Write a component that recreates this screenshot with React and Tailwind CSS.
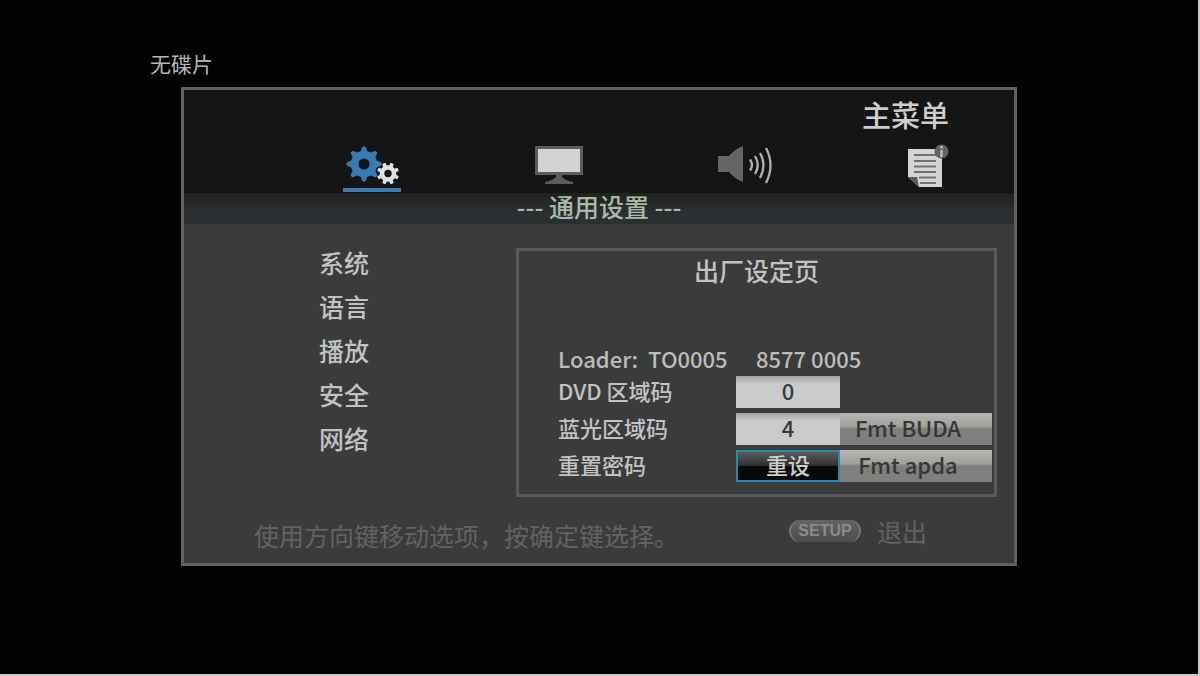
import React from 'react';

const menuItems = ['系统', '语言', '播放', '安全', '网络'];
const teeth = [0, 45, 90, 135, 180, 225, 270, 315];

function GeneralIcon() {
    return (
        <svg width="58" height="42" viewBox="0 0 58 42" aria-hidden="true">
            <g transform="translate(21 18)">
                <circle r="9.4" fill="none" stroke="#367db4" strokeWidth="7.6" />
                {teeth.map((angle) => (
                    <path
                        key={angle}
                        d="M-3.4 -12 L-2 -16.5 Q0 -19 2 -16.5 L3.4 -12 Z"
                        fill="#367db4"
                        transform={`rotate(${angle})`}
                    />
                ))}
            </g>
            <g transform="translate(45 27.5)">
                <circle r="6" fill="none" stroke="#e2e2e2" strokeWidth="4.6" />
                {teeth.map((angle) => (
                    <path
                        key={angle}
                        d="M-2 -7.5 L-1.6 -11 H1.6 L2 -7.5 Z"
                        fill="#e2e2e2"
                        transform={`rotate(${angle + 22.5})`}
                    />
                ))}
            </g>
        </svg>
    );
}

function DisplayIcon() {
    return (
        <svg width="48" height="42" viewBox="0 0 48 42" aria-hidden="true">
            <rect x="1.5" y="1.5" width="45" height="26" fill="#d2d2d2" stroke="#5c5c5c" strokeWidth="3" />
            <path d="M21 29 H27 V31 Q31 35 38 36 V38 H10 V36 Q17 35 21 31 Z" fill="#5c5c5c" />
        </svg>
    );
}

function AudioIcon() {
    return (
        <svg width="56" height="42" viewBox="0 0 56 42" aria-hidden="true">
            <path d="M0 10 H11 Q17 3 25 0 V36 Q17 33 11 26 H0 Z" fill="#656565" />
            <g fill="none" stroke="#b0b0b0" strokeWidth="2.3">
                <path d="M32 13.5 Q36 19 32 24.5" />
                <path d="M37 10 Q42.5 19 37 28" />
                <path d="M42 7 Q49 19 42 32" />
                <path d="M48 2 Q57 19 48 37" />
            </g>
        </svg>
    );
}

function InfoIcon() {
    return (
        <svg width="41" height="42" viewBox="0 0 41 42" className="overflow-visible" aria-hidden="true">
            <path d="M0 3 H34 V41 H11 L0 31 Z" fill="#d4d4d4" />
            <path d="M0 31 H9 L11 41 Z" fill="#5a5a5a" />
            <path d="M6 9 H28 M6 15 H28 M6 20.5 H28 M6 26 H28 M11 31.5 H28 M12 37 H28" stroke="#707070" strokeWidth="1.8" />
            <circle cx="33.5" cy="5.5" r="7" fill="#636363" />
            <path d="M33.5 0 V2.5 M33.5 4 V11" stroke="#bdbdbd" strokeWidth="2.4" />
        </svg>
    );
}

const tabs = [
    { name: '通用设置', Icon: GeneralIcon, active: true },
    { name: '显示设置', Icon: DisplayIcon },
    { name: '音频设置', Icon: AudioIcon },
    { name: '系统信息', Icon: InfoIcon },
];

const fieldClass =
    'h-8 w-full bg-linear-to-b from-[#a4a4a4] to-[#cbcbcb] to-25% pb-1 text-center text-[22px] font-medium text-[#383838]';
const formatClass =
    'h-8 w-full bg-linear-to-b from-[#b5b5b2] via-[#a0a09d] via-42% to-[#7f7f7d] to-50% pr-4 pb-1 text-center text-[22px] leading-7 font-medium text-[#363636]';

export default function App() {
    return (
        <div className="min-h-screen border-r-2 border-b-2 border-[#c8c8c8] bg-black pt-[47px] font-['Noto_Sans_CJK_SC','Noto_Sans',sans-serif] text-[#cdcdcd]">
            <div className="mx-auto max-w-[898px]">
                <p className="mb-2 text-[21px] leading-8 text-[#b5b5b5]">无碟片</p>

                <main className="mx-[31px] border-3 border-[#606060] bg-[#3b3b3b]">
                    {/* Title and tab icons */}
                    <header className="bg-[#141414] pt-2 pr-[65px] pl-[159px]">
                        <h1 className="text-right text-[29px] leading-8 font-medium">主菜单</h1>
                        <nav className="mt-4 flex items-start justify-between pb-px">
                            {tabs.map(({ name, Icon, active }) => (
                                <button
                                    key={name}
                                    type="button"
                                    aria-label={name}
                                    className={active ? 'border-b-4 border-[#367db4]' : 'border-b-4 border-transparent'}
                                >
                                    <Icon />
                                </button>
                            ))}
                        </nav>
                    </header>

                    <h2 className="bg-linear-to-b from-[#202020] to-[#2b2f32] to-60% pb-1 text-center text-[25px] leading-[27px] font-medium text-[#a9bba8]">
                        --- 通用设置 ---
                    </h2>

                    <div className="flex items-start justify-between pt-6 pr-[17px] pl-[135px]">
                        <ul className="-mt-2">
                            {menuItems.map((item) => (
                                <li key={item}>
                                    <button type="button" className="block text-[25px] leading-[44px] font-medium text-[#c2c2c2]">
                                        {item}
                                    </button>
                                </li>
                            ))}
                        </ul>

                        {/* Factory settings */}
                        <section className="w-[481px] border-3 border-[#595961] pt-[3px] pr-0.5 pb-3 pl-[39px]">
                            <h3 className="pr-[37px] text-center text-[25px] leading-8 font-medium text-[#c2c2c2]">出厂设定页</h3>
                            <p className="mt-[58px] flex text-[22px] leading-7 font-medium text-[#bcbcbc]">
                                <span className="w-[198px] whitespace-pre">Loader:  TO0005</span>
                                <span>8577 0005</span>
                            </p>
                            <div className="mt-1 grid grid-cols-[1fr_104px_152px] gap-y-[5px] text-[22px] leading-7">
                                <label htmlFor="dvd-region" className="font-medium text-[#c2c2c2]">DVD 区域码</label>
                                <input id="dvd-region" type="text" defaultValue="0" className={fieldClass} />
                                <span />

                                <label htmlFor="bd-region" className="font-medium text-[#c2c2c2]">蓝光区域码</label>
                                <input id="bd-region" type="text" defaultValue="4" className={fieldClass} />
                                <button type="button" className={formatClass}>Fmt BUDA</button>

                                <label htmlFor="reset-code" className="font-medium text-[#c2c2c2]">重置密码</label>
                                <button
                                    id="reset-code"
                                    type="button"
                                    className="h-8 border-2 border-[#248ba9] bg-linear-to-b from-[#5a5a5a] via-[#323232] via-48% to-[#080808] to-52% pb-1 text-[22px] leading-6 font-medium text-[#cdcdcd]"
                                >
                                    重设
                                </button>
                                <button type="button" className={formatClass}>Fmt apda</button>
                            </div>
                        </section>
                    </div>

                    <footer className="mt-[18px] mb-3 flex h-9 items-start justify-between pr-[87px] pl-[70px] text-[25px] leading-8 text-[#626262]">
                        <p className="self-end">使用方向键移动选项，按确定键选择。</p>
                        <button type="button" className="flex items-center gap-4">
                            <span className="w-[72px] rounded-full border-x-2 border-[#757575] bg-linear-to-b from-[#646464] to-[#4b4b4b] text-center font-['Liberation_Sans',sans-serif] text-base leading-[22px] font-bold text-[#8b8b8b]">
                                SETUP
                            </span>
                            退出
                        </button>
                    </footer>
                </main>
            </div>
        </div>
    );
}
